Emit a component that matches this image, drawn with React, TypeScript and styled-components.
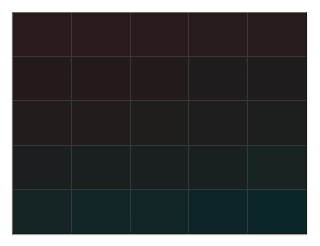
import React, { ReactElement } from "react";
import styled, { createGlobalStyle } from "styled-components";

const GlobalStyle = createGlobalStyle`
  html, body {
    margin: 0;
    padding: 0;
    background: #ffffff;
    font-family: "Liberation Sans", Arial, sans-serif;
  }
`;

const rows: string[][] = [
  ["#2a1a1b", "#2a1a1b", "#291a1b", "#281b1c", "#281b1b"],
  ["#241a1b", "#241a1b", "#231a1b", "#201b1c", "#1f1c1d"],
  ["#221c1b", "#221c1c", "#201d1d", "#1e1e1e", "#1d1f1f"],
  ["#1b1f20", "#1a1f20", "#1a2021", "#192021", "#172222"],
  ["#142324", "#112426", "#112426", "#0c2526", "#0a2627"],
];

export default function App(): ReactElement {
  return (
    <>
      <GlobalStyle />
      <Page>
        <Board>
          {rows.map((row, r) =>
            row.map((color, c) => <Cell key={`${r}-${c}`} $bg={color} />)
          )}
        </Board>
      </Page>
    </>
  );
}

const Page = styled.div`
  padding: 12px;
`;

const Board = styled.div`
  display: grid;
  grid-template-columns: repeat(5, 1fr);
  grid-template-rows: 43px 43px 44px 43px 43px;
  gap: 1px;
  width: 293px;
  background: linear-gradient(#3d3536, #2e3b3b);
  border: 1px solid #161616;
  border-top-color: #6e6a6a;
  border-left-color: #6e6a6a;
  box-shadow: 0 1px 1px rgba(0, 0, 0, 0.35);
`;

const Cell = styled.div<{ $bg: string }>`
  background: ${(p) => p.$bg};
`;
